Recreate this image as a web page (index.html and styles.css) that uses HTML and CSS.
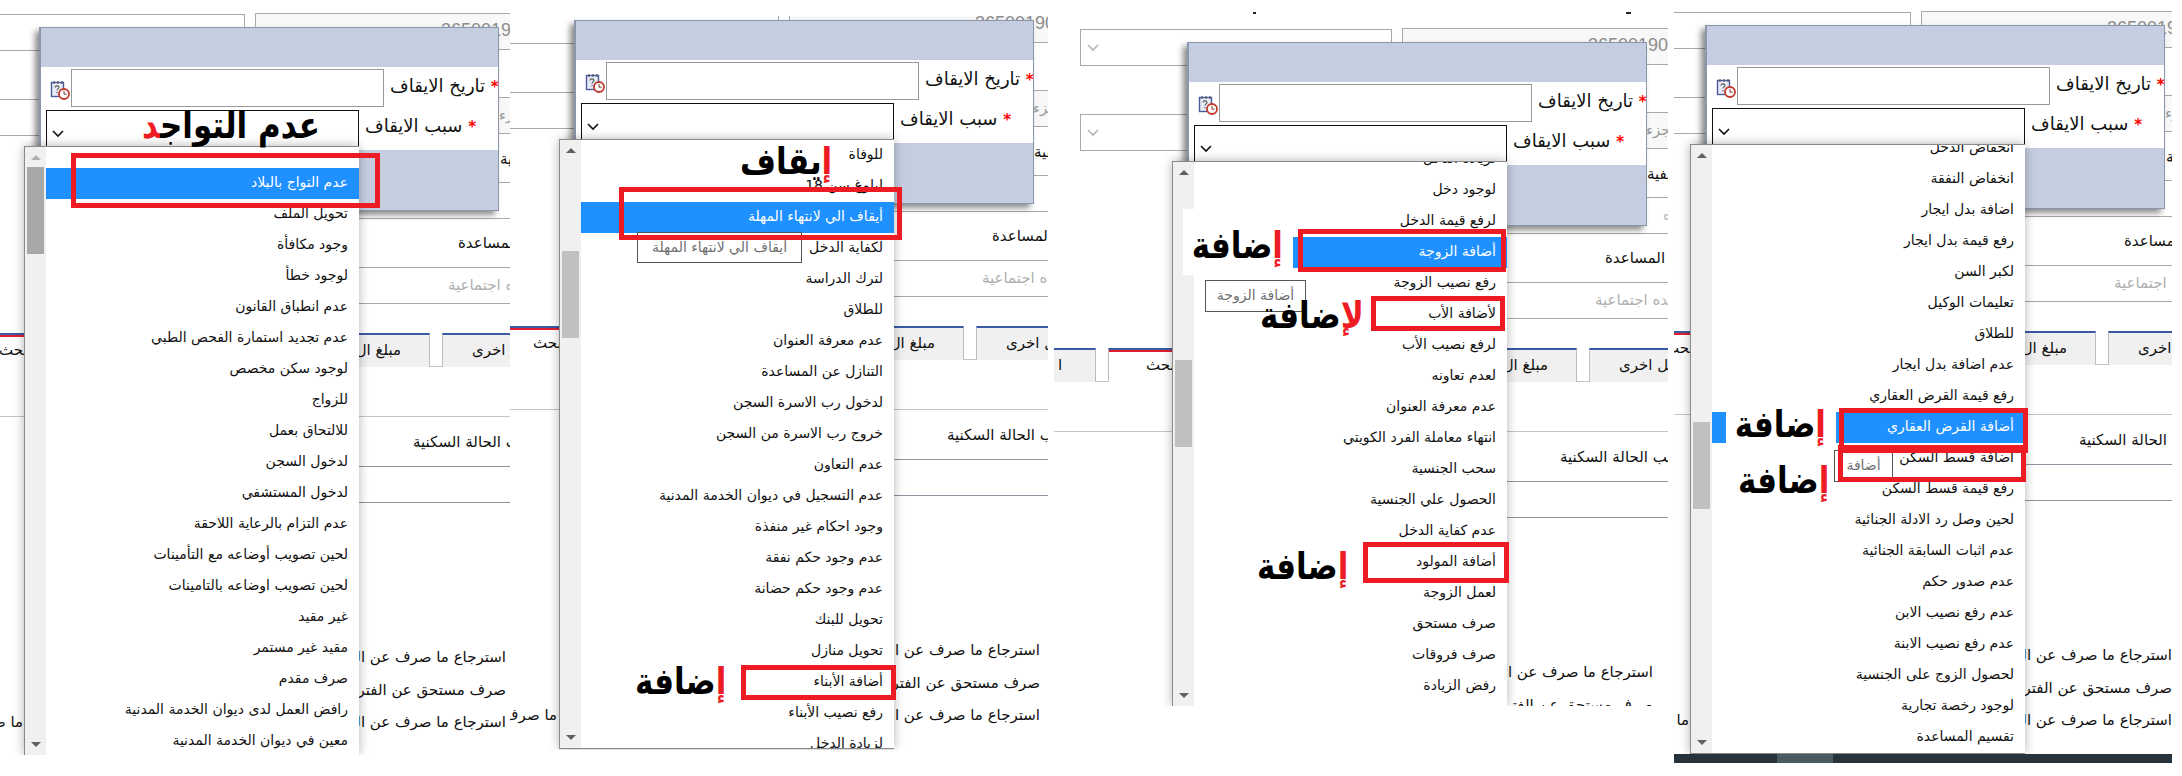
FILE: index.html
```html
<!DOCTYPE html>
<html lang="ar">
<head>
    <meta charset="UTF-8">
    <title>سبب الايقاف</title>
    <link rel="stylesheet" href="styles.css">
</head>
<body>
<div class="sheet">

    <!-- first capture -->
    <section class="shot shot-1">
        <div class="form">
            <div class="split">
                <div class="box box-left"><svg class="chev" viewBox="0 0 12 8"><path d="M1 1l5 5 5-5"/></svg></div>
                <div class="box box-right top-value"><span>36500190</span></div>
            </div>
            <div class="split second">
                <div class="box box-left"><svg class="chev" viewBox="0 0 12 8"><path d="M1 1l5 5 5-5"/></svg></div>
                <div class="box box-right part-label"><span>جزء</span></div>
            </div>
            <div class="right label status-label"><span>الوظيفية</span></div>
            <div class="right box hint-one"><span>ه</span></div>
            <div class="right label help-label"><span>نوع المساعدة</span></div>
            <div class="right box hint-two"><span>مساعده اجتماعية</span></div>
            <div class="tabs">
                <div class="tab tab-a"><span>ا</span></div>
                <div class="tab tab-b"><span>بحث</span></div>
                <div class="tab tab-c"><span>مبلغ ال</span></div>
                <div class="tab tab-d"><span>تفاصيل اخرى</span></div>
            </div>
            <div class="rule-wide"></div>
            <div class="right label house-label"><span>حسب الحالة السكنية</span></div>
            <div class="right box house-box"></div>
            <div class="pay-rows">
                <div class="pay-row"><span>استرجاع ما صرف عن الفترة</span></div>
                <div class="pay-row"><span>صرف مستحق عن الفترة</span></div>
                <div class="pay-row with-note"><em>ما صرف م</em><span>استرجاع ما صرف عن الفترة</span></div>
            </div>
        </div>

        <div class="dialog">
            <div class="dialog-bar"></div>
            <div class="dialog-body">
                <div class="dialog-row">
                    <svg class="cal" viewBox="0 0 20 20"><use href="#cal-icon"/></svg>
                    <input class="date-input" type="text">
                    <label class="dialog-label"><b>*</b> تاريخ الايقاف</label>
                </div>
                <div class="dialog-row row-reason">
                    <div class="select"><svg class="chev dark" viewBox="0 0 12 8"><path d="M1 1l5 5 5-5"/></svg></div>
                    <label class="dialog-label"><b>*</b> سبب الايقاف</label>
                </div>
            </div>
            <div class="dialog-foot"></div>
        </div>

        <div class="dropdown">
            <div class="scroll"><i class="up"></i><i class="thumb"></i><i class="down"></i></div>
            <ul class="options">
                <li class="on">عدم التواج بالبلاد</li>
                <li>تحويل الملف</li>
                <li>وجود مكافأة</li>
                <li>لوجود خطأ</li>
                <li>عدم انطباق القانون</li>
                <li>عدم تجديد استمارة الفحص الطبي</li>
                <li>لوجود سكن مخصص</li>
                <li>للزواج</li>
                <li>للالتحاق بعمل</li>
                <li>لدخول السجن</li>
                <li>لدخول المستشفي</li>
                <li>عدم التزام بالرعاية اللاحقة</li>
                <li>لحين تصويب أوضاعه مع التأمينات</li>
                <li>لحين تصويب اوضاعه بالتامينات</li>
                <li>غير مقيد</li>
                <li>مقيد غير مستمر</li>
                <li>صرف مقدم</li>
                <li>رافض العمل لدى ديوان الخدمة المدنية</li>
                <li>معين في ديوان الخدمة المدنية</li>
            </ul>
        </div>

        <div class="big note-absent">عدم التواج<span class="red">د</span></div>
        <div class="frame f1-a"></div>
    </section>

    <!-- second capture -->
    <section class="shot shot-2">
        <div class="form">
            <div class="split">
                <div class="box box-left"></div>
                <div class="box box-right top-value"><span>36500190</span></div>
            </div>
            <div class="split second">
                <div class="box box-left"></div>
                <div class="box box-right part-label"><span>جزء</span></div>
            </div>
            <div class="right label status-label"><span>الوظيفية</span></div>
            <div class="right box hint-one"><span>ه</span></div>
            <div class="right label help-label"><span>نوع المساعدة</span></div>
            <div class="right box hint-two"><span>مساعده اجتماعية</span></div>
            <div class="tabs">
                <div class="tab tab-a"><span>ا</span></div>
                <div class="tab tab-b"><span>بحث</span></div>
                <div class="tab tab-c"><span>مبلغ ال</span></div>
                <div class="tab tab-d"><span>تفاصيل اخرى</span></div>
            </div>
            <div class="rule-wide"></div>
            <div class="right label house-label"><span>حسب الحالة السكنية</span></div>
            <div class="right box house-box"></div>
            <div class="pay-rows">
                <div class="pay-row"><span>استرجاع ما صرف عن الفترة</span></div>
                <div class="pay-row"><span>صرف مستحق عن الفترة</span></div>
                <div class="pay-row with-note"><em>ما صرف م</em><span>استرجاع ما صرف عن الفترة</span></div>
            </div>
        </div>

        <div class="dialog">
            <div class="dialog-bar"></div>
            <div class="dialog-body">
                <div class="dialog-row">
                    <svg class="cal" viewBox="0 0 20 20"><use href="#cal-icon"/></svg>
                    <input class="date-input" type="text">
                    <label class="dialog-label"><b>*</b> تاريخ الايقاف</label>
                </div>
                <div class="dialog-row row-reason">
                    <div class="select"><svg class="chev dark" viewBox="0 0 12 8"><path d="M1 1l5 5 5-5"/></svg></div>
                    <label class="dialog-label"><b>*</b> سبب الايقاف</label>
                </div>
            </div>
            <div class="dialog-foot"></div>
        </div>

        <div class="dropdown">
            <div class="scroll"><i class="up"></i><i class="thumb"></i><i class="down"></i></div>
            <ul class="options">
                <li>للوفاة</li>
                <li>لبلوغ سن 18</li>
                <li class="on">أيقاف الي لانتهاء المهلة</li>
                <li>لكفاية الدخل</li>
                <li>لترك الدراسة</li>
                <li>للطلاق</li>
                <li>عدم معرفة العنوان</li>
                <li>التنازل عن المساعدة</li>
                <li>لدخول رب الاسرة السجن</li>
                <li>خروج رب الاسرة من السجن</li>
                <li>عدم التعاون</li>
                <li>عدم التسجيل في ديوان الخدمة المدنية</li>
                <li>وجود احكام غير منفذة</li>
                <li>عدم وجود حكم نفقة</li>
                <li>عدم وجود حكم حضانة</li>
                <li>تحويل للبنك</li>
                <li>تحويل منازل</li>
                <li>أضافة الأبناء</li>
                <li>رفع نصيب الأبناء</li>
                <li>لزيادة الدخل</li>
            </ul>
        </div>

        <div class="tip tip-2">أيقاف الي لانتهاء المهلة</div>
        <div class="big note-stop"><span class="red">إ</span>يقاف</div>
        <div class="big note-add-2"><span class="red">إ</span>ضافة</div>
        <div class="frame f2-a"></div>
        <div class="frame f2-b"></div>
    </section>

    <!-- third capture -->
    <section class="shot shot-3">
        <i class="speck speck-a"></i>
        <i class="speck speck-b"></i>
        <div class="form">
            <div class="split">
                <div class="box box-left"><svg class="chev" viewBox="0 0 12 8"><path d="M1 1l5 5 5-5"/></svg></div>
                <div class="box box-right top-value"><span>36500190</span></div>
            </div>
            <div class="split second">
                <div class="box box-left"><svg class="chev" viewBox="0 0 12 8"><path d="M1 1l5 5 5-5"/></svg></div>
                <div class="box box-right part-label"><span>جزء</span></div>
            </div>
            <div class="right label status-label"><span>الوظيفية</span></div>
            <div class="right box hint-one"><span>ه</span></div>
            <div class="right label help-label"><span>نوع المساعدة</span></div>
            <div class="right box hint-two"><span>مساعده اجتماعية</span></div>
            <div class="tabs">
                <div class="tab tab-a"><span>ا</span></div>
                <div class="tab tab-b"><span>بحث</span></div>
                <div class="tab tab-c"><span>مبلغ ال</span></div>
                <div class="tab tab-d"><span>تفاصيل اخرى</span></div>
            </div>
            <div class="rule-wide"></div>
            <div class="right label house-label"><span>حسب الحالة السكنية</span></div>
            <div class="right box house-box"></div>
            <div class="pay-rows">
                <div class="pay-row"><span>استرجاع ما صرف عن الفترة</span></div>
                <div class="pay-row"><span>صرف مستحق عن الفترة</span></div>
                <div class="pay-row with-note"><em>ما صرف م</em><span>استرجاع ما صرف عن الفترة</span></div>
            </div>
        </div>

        <div class="dialog">
            <div class="dialog-bar"></div>
            <div class="dialog-body">
                <div class="dialog-row">
                    <svg class="cal" viewBox="0 0 20 20"><use href="#cal-icon"/></svg>
                    <input class="date-input" type="text">
                    <label class="dialog-label"><b>*</b> تاريخ الايقاف</label>
                </div>
                <div class="dialog-row row-reason">
                    <div class="select"><svg class="chev dark" viewBox="0 0 12 8"><path d="M1 1l5 5 5-5"/></svg></div>
                    <label class="dialog-label"><b>*</b> سبب الايقاف</label>
                </div>
            </div>
            <div class="dialog-foot"></div>
        </div>

        <div class="dropdown">
            <div class="scroll"><i class="up"></i><i class="thumb"></i><i class="down"></i></div>
            <ul class="options">
                <li>لزيادة الدخل</li>
                <li>لوجود دخل</li>
                <li>لرفع قيمة الدخل</li>
                <li class="on">أضافة الزوجة</li>
                <li>رفع نصيب الزوجة</li>
                <li>لأضافة الأب</li>
                <li>لرفع نصيب الأب</li>
                <li>لعدم تعاونه</li>
                <li>عدم معرفة العنوان</li>
                <li>انتهاء معاملة الفرد الكويتي</li>
                <li>سحب الجنسية</li>
                <li>الحصول علي الجنسية</li>
                <li>عدم كفاية الدخل</li>
                <li>أضافة المولود</li>
                <li>لعمل الزوجة</li>
                <li>صرف مستحق</li>
                <li>صرف فروقات</li>
                <li>رفض الزيادة</li>
            </ul>
        </div>

        <div class="tip tip-3">أضافة الزوجة</div>
        <div class="big patch note-add-3"><span class="red">إ</span>ضافة</div>
        <div class="big note-add-3b"><span class="red">لإ</span>ضافة</div>
        <div class="big note-add-3c"><span class="red">إ</span>ضافة</div>
        <div class="frame f3-a"></div>
        <div class="frame f3-b"></div>
        <div class="frame f3-c"></div>
    </section>

    <!-- fourth capture -->
    <section class="shot shot-4">
        <div class="form">
            <div class="split">
                <div class="box box-left"></div>
                <div class="box box-right top-value"><span>36500190</span></div>
            </div>
            <div class="split second">
                <div class="box box-left"></div>
                <div class="box box-right part-label"><span>جزء</span></div>
            </div>
            <div class="right label status-label"><span>الوظيفية</span></div>
            <div class="right box hint-one"><span>ه</span></div>
            <div class="right label help-label"><span>نوع المساعدة</span></div>
            <div class="right box hint-two"><span>مساعده اجتماعية</span></div>
            <div class="tabs">
                <div class="tab tab-a"><span>ا</span></div>
                <div class="tab tab-b"><span>بحث</span></div>
                <div class="tab tab-c"><span>مبلغ ال</span></div>
                <div class="tab tab-d"><span>تفاصيل اخرى</span></div>
            </div>
            <div class="rule-wide"></div>
            <div class="right label house-label"><span>حسب الحالة السكنية</span></div>
            <div class="right box house-box"></div>
            <div class="pay-rows">
                <div class="pay-row"><span>استرجاع ما صرف عن الفترة</span></div>
                <div class="pay-row"><span>صرف مستحق عن الفترة</span></div>
                <div class="pay-row with-note"><em>ما صرف م</em><span>استرجاع ما صرف عن الفترة</span></div>
            </div>
        </div>

        <div class="dialog">
            <div class="dialog-bar"></div>
            <div class="dialog-body">
                <div class="dialog-row">
                    <svg class="cal" viewBox="0 0 20 20"><use href="#cal-icon"/></svg>
                    <input class="date-input" type="text">
                    <label class="dialog-label"><b>*</b> تاريخ الايقاف</label>
                </div>
                <div class="dialog-row row-reason">
                    <div class="select"><svg class="chev dark" viewBox="0 0 12 8"><path d="M1 1l5 5 5-5"/></svg></div>
                    <label class="dialog-label"><b>*</b> سبب الايقاف</label>
                </div>
            </div>
            <div class="dialog-foot"></div>
        </div>

        <div class="dropdown">
            <div class="scroll"><i class="up"></i><i class="thumb"></i><i class="down"></i></div>
            <ul class="options">
                <li>انخفاض الدخل</li>
                <li>انخفاض النفقة</li>
                <li>اضافة بدل ايجار</li>
                <li>رفع قيمة بدل ايجار</li>
                <li>لكبر السن</li>
                <li>تعليمات الوكيل</li>
                <li>للطلاق</li>
                <li>عدم اضافة بدل ايجار</li>
                <li>رفع قيمة القرض العقاري</li>
                <li class="on">أضافة القرض العقاري</li>
                <li>أضافة قسط السكن</li>
                <li>رفع قيمة قسط السكن</li>
                <li>لحين وصل رد الادلة الجنائية</li>
                <li>عدم اثبات السابقة الجنائية</li>
                <li>عدم صدور حكم</li>
                <li>عدم رفع نصيب الابن</li>
                <li>عدم رفع نصيب الابنة</li>
                <li>لحصول الزوج على الجنسية</li>
                <li>لوجود رخصة تجارية</li>
                <li>تقسيم المساعدة</li>
            </ul>
        </div>

        <div class="tip tip-4">أضافة</div>
        <div class="big patch note-add-4"><span class="red">إ</span>ضافة</div>
        <div class="big note-add-4b"><span class="red">إ</span>ضافة</div>
        <div class="frame f4-a"></div>
        <div class="frame f4-b"></div>
        <div class="taskbar"><i></i></div>
    </section>
</div>

<svg class="defs" width="0" height="0">
    <symbol id="cal-icon" viewBox="0 0 20 20">
        <rect x="1.5" y="2.5" width="12" height="14" fill="#e8ebf5" stroke="#4a5a9a" stroke-width="1.4"/>
        <path d="M4 1v3M8 1v3M12 1v3" stroke="#5a5a6a" stroke-width="1.2"/>
        <path d="M5 7.5c0-2.2 4-2.2 4 0 0 1.4-2 1.4-2 3M7 12v1.2" fill="none" stroke="#555" stroke-width="1.1"/>
        <circle cx="14" cy="14" r="5" fill="#fff" stroke="#c0392b" stroke-width="1.8"/>
        <path d="M14 11v3.2h2.6" fill="none" stroke="#7a3b2a" stroke-width="1"/>
    </symbol>
</svg>
</body>
</html>
```

FILE: styles.css
```css
* {
    box-sizing: border-box;
    margin: 0;
    padding: 0;
}

body {
    background: #fff;
    font-family: "DejaVu Sans", sans-serif;
    color: #111;
}

.defs {
    position: absolute;
}

.sheet {
    display: flex;
    width: 2182px;
    height: 776px;
    overflow: hidden;
    align-items: flex-start;
}

/* one pasted capture */
.shot {
    position: relative;
    flex: none;
    overflow: hidden;
    background: #fff;
}

.shot-1 {
    --dy: 0px;
    --col-x: -67px;
    width: 510px;
    height: 755px;
}

.shot-2 {
    --dy: -23px;
    --col-x: -43px;
    width: 538px;
    height: 734px;
    margin-top: 16px;
}

.shot-3 {
    --dy: 15px;
    --col-x: 26px;
    width: 614px;
    height: 706px;
    margin-left: 6px;
}

.shot-4 {
    --dy: -2px;
    --col-x: -75px;
    width: 498px;
    height: 763px;
    margin-left: 6px;
}

.speck {
    position: absolute;
    top: 12px;
    width: 3px;
    height: 2px;
    background: #222;
}

.speck-a { left: 199px; }
.speck-b { left: 572px; width: 5px; }

/* form behind the dialog */
.form {
    width: 1000px;
    margin-left: var(--col-x);
    margin-top: calc(13px + var(--dy));
    font-size: 15px;
}

.box {
    border: 1px solid #a9a9a9;
    height: 37px;
}

.split {
    display: flex;
    gap: 10px;
    height: 38px;
}

.split.second {
    margin-top: 46px;
    height: 39px;
}

.box-left {
    width: 312px;
    margin-top: 1px;
    display: flex;
    align-items: center;
    padding-left: 6px;
}

.split.second .box-left {
    margin-top: 2px;
}

.box-right {
    width: 320px;
    background: #f8f8f8;
    overflow: hidden;
    white-space: nowrap;
}

.chev {
    width: 12px;
    height: 8px;
    fill: none;
    stroke: #b5b5b5;
    stroke-width: 1.6;
}

.chev.dark {
    stroke: #111;
}

.right {
    margin-left: 322px;
    width: 320px;
    white-space: nowrap;
}

.label {
    display: flex;
    align-items: center;
}

.top-value {
    font-family: "Liberation Sans", sans-serif;
    font-size: 18px;
    color: #8d8d8d;
    padding-left: 185px;
    line-height: 32px;
}

.part-label {
    color: #999;
    padding-left: 243px;
    line-height: 34px;
}

.status-label {
    height: 46px;
    padding-left: 245px;
}

.hint-one {
    color: #bbb;
    padding-left: 260px;
    line-height: 34px;
}

.help-label {
    height: 48px;
    padding-left: 203px;
}

.hint-two {
    color: #b0b0b0;
    padding-left: 192px;
    line-height: 34px;
}

.tabs {
    display: flex;
    height: 34px;
    width: 1200px;
    margin-top: 29px;
    margin-left: -300px;
    border-bottom: 1px solid #c4c4c4;
    white-space: nowrap;
}

.tab {
    height: 34px;
    margin-right: 12px;
    background: #f0f0f0;
    border-top: 2px solid #3a5aa5;
    border-left: 1px solid #bdbdbd;
    border-right: 1px solid #bdbdbd;
    line-height: 30px;
    overflow: hidden;
    flex: none;
}

.tab-a {
    width: 316px;
    padding-left: 277px;
}

.tab-b {
    width: 200px;
    background: #fff;
    box-shadow: inset 0 2px 0 #e02030;
    padding-left: 37px;
}

.tab-c {
    width: 257px;
    text-align: right;
    padding-right: 28px;
}

.tab-d {
    width: 400px;
    padding-left: 29px;
}

.rule-wide {
    width: 1200px;
    margin-left: -300px;
    margin-top: 49px;
    border-top: 1px solid #c4c4c4;
}

.house-label {
    height: 49px;
    padding-left: 158px;
}

.house-box {
    height: 37px;
    border-color: #8f93a0;
    border-left: 0;
    border-right: 0;
}

.pay-rows {
    margin-top: 138px;
    width: 573px;
}

.pay-row {
    height: 32.5px;
    line-height: 32px;
    white-space: nowrap;
    direction: rtl;
    text-align: right;
}

.with-note {
    display: flex;
    justify-content: space-between;
}

.with-note em {
    font-style: normal;
    order: 2;
    width: 90px;
}

/* dialog */
.dialog {
    position: absolute;
    top: calc(27px + var(--dy));
    width: 460px;
    border: 1px solid #8a97ab;
    border-left-width: 2px;
    background: #fff;
    box-shadow: -4px 4px 6px rgba(0, 0, 0, .45);
}

.shot-1 .dialog { left: 39px; }
.shot-2 .dialog { left: 64px; }
.shot-3 .dialog { left: 133px; }
.shot-4 .dialog { left: 31px; }

.dialog-bar {
    height: 39px;
    background: #c5cee0;
}

.dialog-foot {
    height: 60px;
    background: #c5cee0;
}

.dialog-body {
    height: 83px;
    padding-top: 2px;
}

.dialog-row {
    display: flex;
    align-items: center;
    height: 38px;
}

.row-reason {
    margin-top: 3px;
    height: 37px;
}

.cal {
    width: 20px;
    height: 20px;
    margin-left: 9px;
    margin-right: 1px;
    margin-top: 3px;
    flex: none;
}

.date-input {
    width: 313px;
    height: 38px;
    border: 1px solid #999;
    background: #fff;
    flex: none;
}

.select {
    width: 313px;
    height: 37px;
    margin-left: 5px;
    border: 1px solid #111;
    padding: 12px 0 0 5px;
    flex: none;
}

.dialog-label {
    font-size: 18px;
    direction: rtl;
    white-space: nowrap;
    margin-left: 6px;
    padding-bottom: 6px;
}

.dialog-label b {
    color: #f00;
    font-size: 15px;
}

/* open list */
.dropdown {
    position: absolute;
    display: flex;
    width: 335px;
    border-left: 1px solid #8a8a8a;
    border-top: 1px solid #8a8a8a;
    background: #fff;
    overflow: hidden;
    box-shadow: 0 0 10px rgba(0, 0, 0, .3);
}

.shot-1 .dropdown { left: 24px; top: 146px; height: 609px; --row-top: 21px; --thumb: 20px; }
.shot-2 .dropdown { left: 49px; top: 123px; height: 610px; --row-top: 0px; --thumb: 111px; border-bottom: 1px solid #8a8a8a; }
.shot-3 .dropdown { left: 118px; top: 161px; height: 545px; --row-top: -18px; --thumb: 198px; }
.shot-4 .dropdown { left: 16px; top: 144px; height: 610px; --row-top: -12px; --thumb: 277px; border-bottom: 1px solid #8a8a8a; }

.scroll {
    flex: none;
    width: 21px;
    background: #f0f0f0;
    display: flex;
    flex-direction: column;
    align-items: center;
    position: relative;
}

.scroll .thumb {
    position: absolute;
    top: var(--thumb);
    left: 2px;
    width: 17px;
    height: 87px;
    background: #c0c0c0;
}

.shot-1 .scroll .thumb {
    background: #a8a8a8;
}

.up,
.down {
    width: 0;
    height: 0;
    border-left: 5px solid transparent;
    border-right: 5px solid transparent;
}

.up {
    margin-top: 8px;
    border-bottom: 5px solid #606060;
}

.down {
    margin-top: auto;
    margin-bottom: 8px;
    border-top: 5px solid #606060;
}

.shot-1 .up {
    border-bottom-color: #b0b0b0;
}

.options {
    list-style: none;
    flex: 1;
    margin-top: var(--row-top);
    direction: rtl;
    font-size: 14px;
}

.options li {
    height: 31px;
    line-height: 29px;
    padding-right: 11px;
    white-space: nowrap;
}

.options .on {
    background: #1e90ff;
    color: #fff;
}

/* marks pasted over the captures */
.big {
    position: absolute;
    font-size: 31px;
    font-weight: bold;
    color: #000;
    white-space: nowrap;
    direction: rtl;
    line-height: 44px;
    transform: scaleY(1.2);
    transform-origin: top;
}

.red {
    color: #ed1c24;
}

.patch {
    background: #fff;
}

.note-absent { left: 142px; top: 98px; }
.note-stop { left: 230px; top: 118px; }
.note-add-2 { left: 125px; top: 638px; }
.note-add-3 { left: 129px; top: 209px; width: 110px; height: 55px; padding-right: 10px; padding-top: 8px; }
.note-add-3b { left: 206px; top: 288px; }
.note-add-3c { left: 203px; top: 539px; }
.note-add-4 { left: 52px; top: 405px; width: 110px; height: 37px; padding-right: 10px; line-height: 33px; }
.note-add-4b { left: 64px; top: 453px; }

.frame {
    position: absolute;
    border: 5px solid #ed1c24;
}

.f1-a { left: 71px; top: 153px; width: 309px; height: 55px; }
.f2-a { left: 109px; top: 171px; width: 283px; height: 53px; }
.f2-b { left: 231px; top: 649px; width: 155px; height: 35px; }
.f3-a { left: 244px; top: 229px; width: 208px; height: 43px; }
.f3-b { left: 317px; top: 296px; width: 134px; height: 35px; }
.f3-c { left: 309px; top: 542px; width: 146px; height: 41px; }
.f4-a { left: 165px; top: 408px; width: 189px; height: 45px; }
.f4-b { left: 164px; top: 445px; width: 188px; height: 37px; }

.tip {
    position: absolute;
    border: 1px solid #555;
    background: #fff;
    color: #707070;
    font-size: 14px;
    line-height: 29px;
    text-align: center;
    white-space: nowrap;
    direction: rtl;
}

.tip-2 { left: 127px; top: 216px; width: 165px; height: 31px; }
.tip-3 { left: 151px; top: 280px; width: 101px; height: 32px; }
.tip-4 { left: 160px; top: 450px; width: 59px; height: 32px; }

.taskbar {
    position: absolute;
    left: 0;
    right: 0;
    top: 754px;
    height: 9px;
    background: #26333d;
}

.taskbar i {
    display: block;
    width: 56px;
    height: 9px;
    margin-left: 103px;
    background: #4a5a63;
}
```
